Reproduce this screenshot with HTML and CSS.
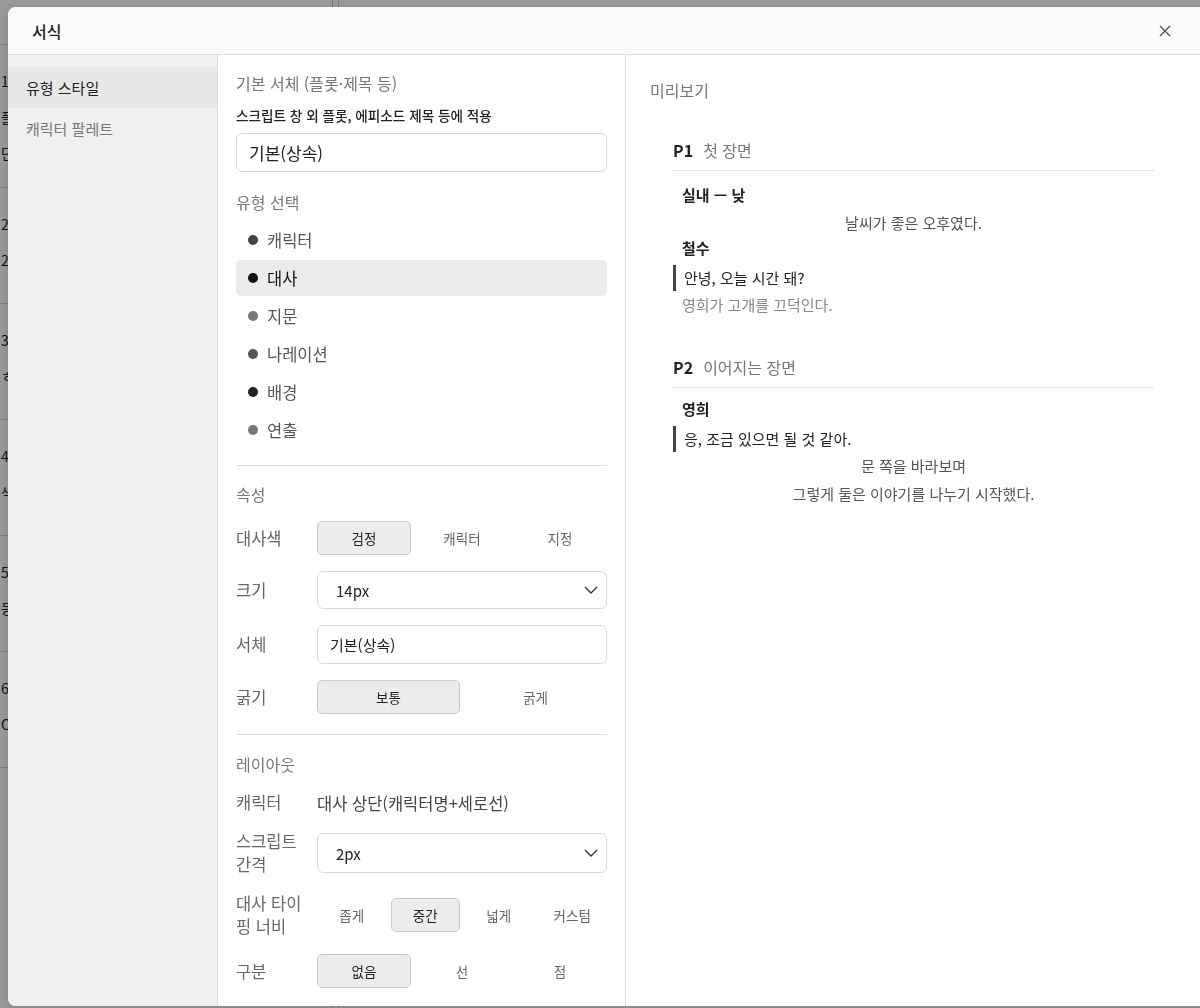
FILE: index.html
```html
<!DOCTYPE html>
<html lang="ko">
<head>
    <meta charset="UTF-8">
    <meta name="viewport" content="width=device-width, initial-scale=1.0">
    <title>서식</title>
    <link rel="stylesheet" href="styles.css">
</head>
<body>

    <!-- page behind the dialog -->
    <div class="bg-page">
        <div class="bg-list">
            <div class="bg-head"></div>
            <div class="bg-row first">
                <span>1</span>
                <span>플</span>
                <span>단</span>
            </div>
            <div class="bg-row">
                <span>2</span>
                <span>2</span>
            </div>
            <div class="bg-row">
                <span>3</span>
                <span>ㅎ</span>
            </div>
            <div class="bg-row">
                <span>4</span>
                <span>색</span>
            </div>
            <div class="bg-row">
                <span>5</span>
                <span>등</span>
            </div>
            <div class="bg-row">
                <span>6</span>
                <span>C</span>
            </div>
        </div>
        <div class="bg-side"></div>
    </div>
    <div class="overlay"></div>

    <div class="modal">
        <div class="modal-header">
            <h2>서식</h2>
            <button class="close-btn" aria-label="닫기">
                <svg width="14" height="14" viewBox="0 0 14 14"><path d="M2 2 L12 12 M12 2 L2 12" stroke="#555" stroke-width="1.4" fill="none"/></svg>
            </button>
        </div>

        <div class="modal-body">
            <nav class="sidebar">
                <div class="side-item active">유형 스타일</div>
                <div class="side-item">캐릭터 팔레트</div>
            </nav>

            <section class="settings">
                <div class="group-title">기본 서체 (플롯·제목 등)</div>
                <div class="desc">스크립트 창 외 플롯, 에피소드 제목 등에 적용</div>
                <div class="text-input big">기본(상속)</div>

                <div class="group-title spaced">유형 선택</div>
                <ul class="type-list">
                    <li><span class="dot dot-character"></span>캐릭터</li>
                    <li class="active"><span class="dot dot-dialogue"></span>대사</li>
                    <li><span class="dot dot-action"></span>지문</li>
                    <li><span class="dot dot-narration"></span>나레이션</li>
                    <li><span class="dot dot-scene"></span>배경</li>
                    <li><span class="dot dot-direction"></span>연출</li>
                </ul>

                <hr class="divider">

                <div class="group-title">속성</div>
                <div class="prop-rows">
                    <div class="prop-row">
                        <div class="prop-label">대사색</div>
                        <div class="seg seg-3">
                            <span class="seg-btn on">검정</span>
                            <span class="seg-btn">캐릭터</span>
                            <span class="seg-btn">지정</span>
                        </div>
                    </div>
                    <div class="prop-row">
                        <div class="prop-label">크기</div>
                        <div class="select">
                            <span>14px</span>
                            <svg width="14" height="8" viewBox="0 0 14 8"><path d="M1 1 L7 7 L13 1" stroke="#333" stroke-width="1.4" fill="none"/></svg>
                        </div>
                    </div>
                    <div class="prop-row">
                        <div class="prop-label">서체</div>
                        <div class="text-input">기본(상속)</div>
                    </div>
                    <div class="prop-row">
                        <div class="prop-label">굵기</div>
                        <div class="seg seg-2">
                            <span class="seg-btn on">보통</span>
                            <span class="seg-btn">굵게</span>
                        </div>
                    </div>
                </div>

                <hr class="divider lower">

                <div class="group-title">레이아웃</div>
                <div class="prop-rows">
                    <div class="prop-row">
                        <div class="prop-label">캐릭터</div>
                        <div class="prop-value">대사 상단(캐릭터명+세로선)</div>
                    </div>
                    <div class="prop-row">
                        <div class="prop-label">스크립트 간격</div>
                        <div class="select tall">
                            <span>2px</span>
                            <svg width="14" height="8" viewBox="0 0 14 8"><path d="M1 1 L7 7 L13 1" stroke="#333" stroke-width="1.4" fill="none"/></svg>
                        </div>
                    </div>
                    <div class="prop-row">
                        <div class="prop-label">대사 타이핑 너비</div>
                        <div class="seg seg-4">
                            <span class="seg-btn">좁게</span>
                            <span class="seg-btn on">중간</span>
                            <span class="seg-btn">넓게</span>
                            <span class="seg-btn">커스텀</span>
                        </div>
                    </div>
                    <div class="prop-row">
                        <div class="prop-label">구분</div>
                        <div class="seg seg-3">
                            <span class="seg-btn on">없음</span>
                            <span class="seg-btn">선</span>
                            <span class="seg-btn">점</span>
                        </div>
                    </div>
                </div>
            </section>

            <section class="preview">
                <div class="preview-title">미리보기</div>

                <div class="page first">
                    <div class="page-head"><strong>P1</strong><span>첫 장면</span></div>
                    <div class="page-body">
                        <div class="scene">실내 — 낮</div>
                        <div class="action center">날씨가 좋은 오후였다.</div>
                        <div class="char-name">철수</div>
                        <div class="dialogue">안녕, 오늘 시간 돼?</div>
                        <div class="action">영희가 고개를 끄덕인다.</div>
                    </div>
                </div>

                <div class="page">
                    <div class="page-head"><strong>P2</strong><span>이어지는 장면</span></div>
                    <div class="page-body">
                        <div class="char-name">영희</div>
                        <div class="dialogue">응, 조금 있으면 될 것 같아.</div>
                        <div class="action center">문 쪽을 바라보며</div>
                        <div class="action center">그렇게 둘은 이야기를 나누기 시작했다.</div>
                    </div>
                </div>
            </section>
        </div>
    </div>

</body>
</html>
```

FILE: styles.css
```css
* {
    box-sizing: border-box;
}

body {
    margin: 0;
    font-family: "Noto Sans CJK KR", "Noto Sans", sans-serif;
    color: #222;
    background-color: #fff;
    overflow: hidden;
}

/* page behind the dialog */
.bg-page {
    display: flex;
    height: 1008px;
}

.bg-list {
    width: 333px;
    border-right: 1px solid #ccc;
    font-size: 14px;
}

.bg-head {
    height: 45px;
    border-bottom: 1px solid #ccc;
}

.bg-row {
    display: flex;
    flex-direction: column;
    height: 116px;
    padding: 18px 0 0 1px;
    line-height: 36px;
    border-bottom: 1px solid #ccc;
}

.bg-row.first {
    height: 143px;
}

.bg-side {
    width: 6px;
    border-right: 1px solid #ccc;
}

.overlay {
    position: fixed;
    inset: 0;
    background-color: rgba(0, 0, 0, 0.4);
}

/* dialog */
.modal {
    position: fixed;
    left: 8px;
    top: 7px;
    width: 1200px;
    height: 999px;
    background-color: #fff;
    border-radius: 8px;
    display: flex;
    flex-direction: column;
    overflow: hidden;
    box-shadow: 0 2px 10px rgba(0, 0, 0, 0.15);
}

.modal-header {
    height: 48px;
    flex-shrink: 0;
    display: flex;
    align-items: center;
    justify-content: space-between;
    padding: 0 36px 0 24px;
    background-color: #fafafa;
    border-bottom: 1px solid #ddd;
}

.modal-header h2 {
    margin: 0;
    font-size: 16px;
    font-weight: 500;
    color: #222;
}

.close-btn {
    border: none;
    background: none;
    padding: 0;
    width: 14px;
    height: 14px;
    display: flex;
    cursor: pointer;
}

.modal-body {
    flex: 1;
    display: flex;
    min-height: 0;
}

/* left menu */
.sidebar {
    width: 210px;
    flex-shrink: 0;
    padding-top: 12px;
    background-color: #f0f0f0;
    border-right: 1px solid #ddd;
}

.side-item {
    height: 41px;
    line-height: 41px;
    padding-left: 18px;
    font-size: 15px;
    color: #777;
}

.side-item.active {
    background-color: #e7e7e7;
    color: #222;
}

/* settings column */
.settings {
    width: 408px;
    flex-shrink: 0;
    padding: 17px 18px 0 18px;
    border-right: 1px solid #ddd;
    overflow: hidden;
}

.group-title {
    font-size: 16px;
    line-height: 22px;
    color: #777;
}

.group-title.spaced {
    margin-top: 19px;
}

.desc {
    margin-top: 11px;
    font-size: 13.6px;
    line-height: 20px;
    font-weight: 500;
    color: #222;
}

.text-input {
    flex: 1;
    height: 39px;
    display: flex;
    align-items: center;
    padding: 0 12px;
    border: 1px solid #d8d8d8;
    border-radius: 6px;
    font-size: 15px;
    color: #222;
}

.text-input.big {
    margin-top: 8px;
    font-size: 17px;
}

.type-list {
    list-style: none;
    margin: 9px 0 0 0;
    padding: 0;
}

.type-list li {
    height: 36px;
    margin-bottom: 2px;
    display: flex;
    align-items: center;
    gap: 9px;
    padding-left: 12px;
    border-radius: 5px;
    font-size: 16.5px;
    color: #555;
}

.type-list li.active {
    background-color: #ebebeb;
    color: #111;
}

.dot {
    width: 10px;
    height: 10px;
    border-radius: 50%;
}

.dot-character { background-color: #444; }
.dot-dialogue { background-color: #111; }
.dot-action { background-color: #777; }
.dot-narration { background-color: #555; }
.dot-scene { background-color: #222; }
.dot-direction { background-color: #777; }

.divider {
    border: none;
    border-top: 1px solid #ddd;
    margin: 17px 0 17px 0;
}

.divider.lower {
    margin: 20px 0 18px 0;
}

.prop-rows {
    margin-top: 16px;
    display: flex;
    flex-direction: column;
    gap: 16px;
}

.prop-row {
    display: flex;
    align-items: center;
}

.prop-label {
    width: 81px;
    flex-shrink: 0;
    font-size: 16.5px;
    line-height: 23px;
    color: #666;
    padding-right: 8px;
}

.prop-value {
    font-size: 16.5px;
    line-height: 22px;
    color: #444;
}

.seg {
    flex: 1;
    display: grid;
    gap: 4px;
}

.seg-2 { grid-template-columns: repeat(2, 1fr); }
.seg-3 { grid-template-columns: repeat(3, 1fr); }
.seg-4 { grid-template-columns: repeat(4, 1fr); }

.seg-btn {
    height: 34px;
    display: flex;
    align-items: center;
    justify-content: center;
    border: 1px solid transparent;
    border-radius: 5px;
    font-size: 13.5px;
    color: #666;
}

.seg-btn.on {
    background-color: #ececec;
    border-color: #cacaca;
    color: #222;
}

.select {
    flex: 1;
    height: 38px;
    display: flex;
    align-items: center;
    justify-content: space-between;
    padding: 0 8px 0 18px;
    border: 1px solid #d8d8d8;
    border-radius: 6px;
    font-size: 15px;
    color: #222;
}

.select.tall {
    height: 40px;
}

/* preview column */
.preview {
    flex: 1;
    padding: 24px 0 0 24px;
}

.preview-title {
    font-size: 16px;
    line-height: 22px;
    color: #777;
}

.page {
    width: 481px;
    margin: 37px 0 0 23px;
}

.page.first {
    margin-top: 38px;
}

.page-head {
    display: flex;
    gap: 10px;
    line-height: 22px;
    padding-bottom: 9px;
    border-bottom: 1px solid #e4e4e4;
    font-size: 16px;
}

.page-head strong {
    font-weight: 700;
    color: #222;
}

.page-head span {
    color: #777;
}

.page-body {
    padding-top: 10px;
    font-size: 15px;
}

.scene {
    padding-left: 9px;
    font-size: 15px;
    font-weight: 700;
    line-height: 28px;
    color: #222;
}

.char-name {
    padding-left: 9px;
    font-size: 15px;
    font-weight: 700;
    line-height: 22px;
    color: #222;
}

.dialogue {
    margin-top: 6px;
    height: 26px;
    line-height: 26px;
    padding-left: 8px;
    border-left: 3px solid #444;
    color: #222;
}

.action {
    padding-left: 9px;
    line-height: 28px;
    color: #888;
}

.action.center {
    text-align: center;
    padding: 0 9px;
    color: #555;
}
```
